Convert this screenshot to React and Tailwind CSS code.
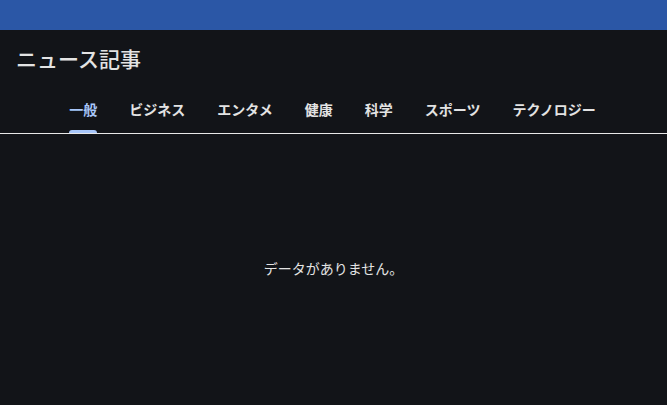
import { useState } from 'react';

const tabs = ['一般', 'ビジネス', 'エンタメ', '健康', '科学', 'スポーツ', 'テクノロジー'];

const App = () => {
  const [active, setActive] = useState(0);

  return (
    <div
      className="w-full h-[405px] bg-[#121418] flex flex-col"
      style={{ fontFamily: '"Noto Sans CJK JP", "Noto Sans", sans-serif' }}
    >
      {/* top bar */}
      <div className="h-[30px] bg-[#2b57a6] shrink-0" />

      {/* title */}
      <div className="h-[56px] flex items-center pl-4">
        <h1 className="text-[21px] font-medium text-[#e3e3e3] leading-none">ニュース記事</h1>
      </div>

      {/* tabs */}
      <div className="flex justify-center border-b border-[#e8e8e8] pr-[2px]">
        {tabs.map((t, i) => (
          <button
            key={t}
            onClick={() => setActive(i)}
            className={`relative h-[47px] px-4 text-[14px] font-semibold ${
              i === active ? 'text-[#a8c7fa]' : 'text-[#e3e3e3]'
            }`}
          >
            {t}
            {i === active && (
              <span className="absolute left-4 right-4 bottom-0 h-[3px] rounded-t-full bg-[#a8c7fa]" />
            )}
          </button>
        ))}
      </div>

      {/* empty state */}
      <div className="flex-1 flex items-center justify-center pb-[3px]">
        <p className="text-[14px] text-[#e3e3e3]">データがありません。</p>
      </div>
    </div>
  );
};

export default App;
